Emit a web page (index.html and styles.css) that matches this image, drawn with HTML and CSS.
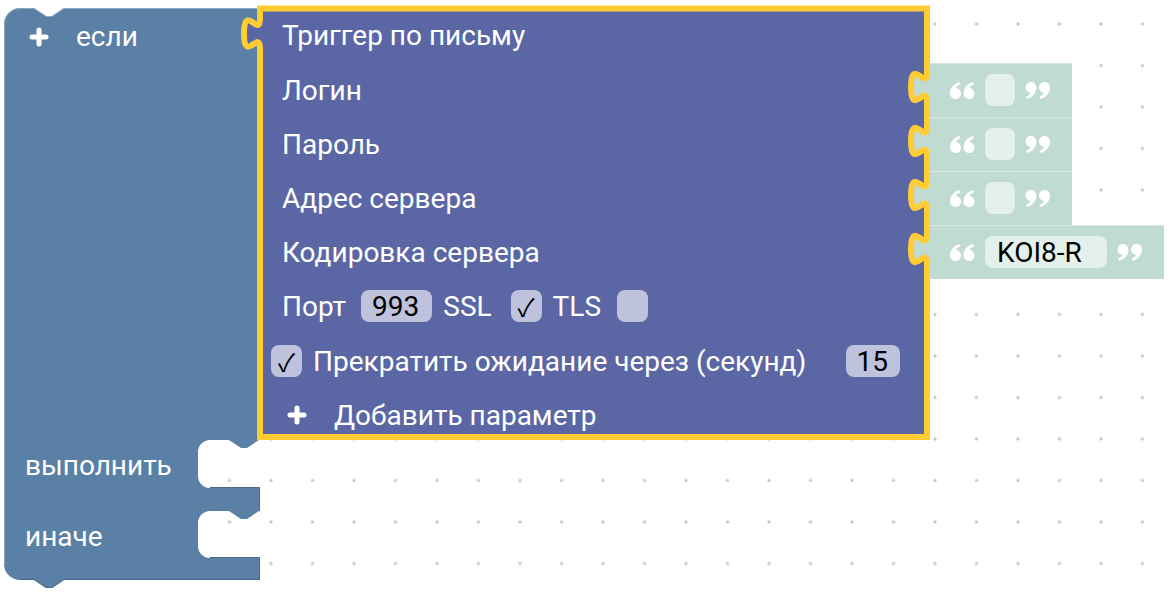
FILE: index.html
```html
<html lang="ru">
<head>
  <meta charset="UTF-8" />
  <title>Триггер по письму</title>
  <link rel="stylesheet" href="styles.css">
</head>
<body>
  <div class="workspace">

    <!-- блок "если / выполнить / иначе" -->
    <div class="block if-block">
      <svg class="shape if-shape" width="262" height="592" viewBox="0 0 262 592">
        <path class="if-fill" d="M4,24 a16,16 0 0 1 16,-16 H34 l12,8 h6 l12,-8 H260 V440 H259 l-12,8 h-6 l-12,-8 H210 a12,12 0 0 0 -12,12 V476 a12,12 0 0 0 12,12 H260 V511 H259 l-12,8 h-6 l-12,-8 H210 a12,12 0 0 0 -12,12 V546 a12,12 0 0 0 12,12 H260 V580 H64 l-12,8 h-6 l-12,-8 H20 a16,16 0 0 1 -16,-16 Z"/>
        <path class="if-light" d="M4.5,564 V24 a15.5,15.5 0 0 1 15.5,-15.5 H34 l12,8 h6 l12,-8 H258"/>
        <path class="if-dark" d="M210,487.5 H259.5 V511 M210,557.5 H259.5 V579.5 H64 l-12,8 h-6 l-12,-8 H20"/>
      </svg>
      <div class="if-head">
        <div class="if-title">
          <svg class="plus" width="20" height="20" viewBox="0 0 20 20"><path d="M10,3 V17 M3,10 H17"/></svg>
          <span>если</span>
        </div>
      </div>
      <div class="stmt stmt-do">выполнить</div>
      <div class="stmt-gap"></div>
      <div class="stmt stmt-else">иначе</div>
    </div>

    <!-- блок триггера с подключёнными строками -->
    <div class="block trigger-block">
      <svg class="shape trigger-shape" width="930" height="445" viewBox="240 3 930 445">
        <path class="trigger-fill" d="M260,8.5 H927 V72 c0,20 -16,-16 -16,15 s16,-5 16,15 V126 c0,20 -16,-16 -16,15 s16,-5 16,15 V180 c0,20 -16,-16 -16,15 s16,-5 16,15 V234 c0,20 -16,-16 -16,15 s16,-5 16,15 V437 H260 V48.5 c0,-20 -16,16 -16,-15 s16,5 16,-15 Z"/>
        <path class="tab-fill" d="M931,72 H927 c0,20 -16,-16 -16,15 s16,-5 16,15 H931 Z"/>
        <path class="tab-fill" d="M931,126 H927 c0,20 -16,-16 -16,15 s16,-5 16,15 H931 Z"/>
        <path class="tab-fill" d="M931,180 H927 c0,20 -16,-16 -16,15 s16,-5 16,15 H931 Z"/>
        <path class="tab-fill" d="M931,234 H927 c0,20 -16,-16 -16,15 s16,-5 16,15 H931 Z"/>
        <path class="selected" d="M260,8.5 H927 V72 c0,20 -16,-16 -16,15 s16,-5 16,15 V126 c0,20 -16,-16 -16,15 s16,-5 16,15 V180 c0,20 -16,-16 -16,15 s16,-5 16,15 V234 c0,20 -16,-16 -16,15 s16,-5 16,15 V437 H260 V48.5 c0,-20 -16,16 -16,-15 s16,5 16,-15 Z"/>
      </svg>

      <div class="row">Триггер по письму</div>

      <div class="row">Логин</div>
      <div class="text-block">
        <svg class="quote" width="25" height="17" viewBox="0 0 25 17"><path d="M0,11.5 C0,6 3.5,2 9.5,0 L10.5,2.3 C7.5,3.8 6.2,5 6,6.1 A5.5,5.5 0 1 1 0,11.5 Z M13.5,11.5 C13.5,6 17,2 23,0 L24,2.3 C21,3.8 19.7,5 19.5,6.1 A5.5,5.5 0 1 1 13.5,11.5 Z"/></svg>
        <span class="text-field"></span>
        <svg class="quote" width="25" height="17" viewBox="0 0 25 17"><path transform="rotate(180 12.5 8.5)" d="M0,11.5 C0,6 3.5,2 9.5,0 L10.5,2.3 C7.5,3.8 6.2,5 6,6.1 A5.5,5.5 0 1 1 0,11.5 Z M13.5,11.5 C13.5,6 17,2 23,0 L24,2.3 C21,3.8 19.7,5 19.5,6.1 A5.5,5.5 0 1 1 13.5,11.5 Z"/></svg>
      </div>

      <div class="row">Пароль</div>
      <div class="text-block">
        <svg class="quote" width="25" height="17" viewBox="0 0 25 17"><path d="M0,11.5 C0,6 3.5,2 9.5,0 L10.5,2.3 C7.5,3.8 6.2,5 6,6.1 A5.5,5.5 0 1 1 0,11.5 Z M13.5,11.5 C13.5,6 17,2 23,0 L24,2.3 C21,3.8 19.7,5 19.5,6.1 A5.5,5.5 0 1 1 13.5,11.5 Z"/></svg>
        <span class="text-field"></span>
        <svg class="quote" width="25" height="17" viewBox="0 0 25 17"><path transform="rotate(180 12.5 8.5)" d="M0,11.5 C0,6 3.5,2 9.5,0 L10.5,2.3 C7.5,3.8 6.2,5 6,6.1 A5.5,5.5 0 1 1 0,11.5 Z M13.5,11.5 C13.5,6 17,2 23,0 L24,2.3 C21,3.8 19.7,5 19.5,6.1 A5.5,5.5 0 1 1 13.5,11.5 Z"/></svg>
      </div>

      <div class="row">Адрес сервера</div>
      <div class="text-block">
        <svg class="quote" width="25" height="17" viewBox="0 0 25 17"><path d="M0,11.5 C0,6 3.5,2 9.5,0 L10.5,2.3 C7.5,3.8 6.2,5 6,6.1 A5.5,5.5 0 1 1 0,11.5 Z M13.5,11.5 C13.5,6 17,2 23,0 L24,2.3 C21,3.8 19.7,5 19.5,6.1 A5.5,5.5 0 1 1 13.5,11.5 Z"/></svg>
        <span class="text-field"></span>
        <svg class="quote" width="25" height="17" viewBox="0 0 25 17"><path transform="rotate(180 12.5 8.5)" d="M0,11.5 C0,6 3.5,2 9.5,0 L10.5,2.3 C7.5,3.8 6.2,5 6,6.1 A5.5,5.5 0 1 1 0,11.5 Z M13.5,11.5 C13.5,6 17,2 23,0 L24,2.3 C21,3.8 19.7,5 19.5,6.1 A5.5,5.5 0 1 1 13.5,11.5 Z"/></svg>
      </div>

      <div class="row">Кодировка сервера</div>
      <div class="text-block">
        <svg class="quote" width="25" height="17" viewBox="0 0 25 17"><path d="M0,11.5 C0,6 3.5,2 9.5,0 L10.5,2.3 C7.5,3.8 6.2,5 6,6.1 A5.5,5.5 0 1 1 0,11.5 Z M13.5,11.5 C13.5,6 17,2 23,0 L24,2.3 C21,3.8 19.7,5 19.5,6.1 A5.5,5.5 0 1 1 13.5,11.5 Z"/></svg>
        <span class="text-field">KOI8-R</span>
        <svg class="quote" width="25" height="17" viewBox="0 0 25 17"><path transform="rotate(180 12.5 8.5)" d="M0,11.5 C0,6 3.5,2 9.5,0 L10.5,2.3 C7.5,3.8 6.2,5 6,6.1 A5.5,5.5 0 1 1 0,11.5 Z M13.5,11.5 C13.5,6 17,2 23,0 L24,2.3 C21,3.8 19.7,5 19.5,6.1 A5.5,5.5 0 1 1 13.5,11.5 Z"/></svg>
      </div>

      <div class="row row-port">
        <span>Порт</span>
        <span class="field port-field">993</span>
        <span>SSL</span>
        <span class="check ssl-check">✓</span>
        <span>TLS</span>
        <span class="check tls-check"></span>
      </div>

      <div class="row row-timeout">
        <span class="check">✓</span>
        <span>Прекратить ожидание через (секунд)</span>
        <span class="field field-end">15</span>
      </div>

      <div class="row row-add">
        <svg class="plus" width="20" height="20" viewBox="0 0 20 20"><path d="M10,3 V17 M3,10 H17"/></svg>
        <span>Добавить параметр</span>
      </div>
    </div>

  </div>
</body>
</html>
```

FILE: styles.css
```css
body {
  margin: 0;
  font-family: Roboto, "Liberation Sans", sans-serif;
}

.workspace {
  position: relative;
  width: 1170px;
  height: 595px;
  overflow: hidden;
  background-color: #fff;
  background-image: radial-gradient(circle, #c9c9c9 1.3px, transparent 1.9px);
  background-size: 41.5px 41.5px;
  background-position: 1.25px 3.25px;
}

/* блоки лежат на холсте */
.block {
  position: absolute;
  isolation: isolate;
  color: #fff;
  font-size: 28px;
  white-space: nowrap;
}

.shape {
  position: absolute;
  z-index: -1;
  overflow: visible;
}

.plus path {
  stroke: #fff;
  stroke-width: 5;
  stroke-linecap: round;
  fill: none;
}

/* если / выполнить / иначе */
.if-block {
  left: 0;
  top: 8px;
  width: 260px;
  height: 572px;
  display: flex;
  flex-direction: column;
}

.if-shape {
  left: 0;
  top: -8px;
}

.if-fill { fill: #5b80a5; }
.if-light { fill: none; stroke: #8da7c1; stroke-width: 1; }
.if-dark { fill: none; stroke: #48678a; stroke-width: 1; }

.if-head {
  height: 432px;
}

.if-title {
  height: 57px;
  display: flex;
  align-items: center;
  gap: 27px;
  padding-left: 29px;
}

.stmt {
  display: flex;
  align-items: center;
  padding-left: 25px;
}

.stmt-do { height: 50px; }
.stmt-gap { height: 21px; }
.stmt-else { height: 50px; }

/* триггер по письму */
.trigger-block {
  left: 260px;
  top: 8px;
  display: grid;
  grid-template-columns: 667px auto;
  grid-template-rows: 55px 54px 54px 54px 54px 54px 56px 52px;
  column-gap: 3px;
}

.trigger-shape {
  left: -20px;
  top: -5px;
}

.trigger-fill { fill: #5b67a5; }
.tab-fill { fill: #bfdbd2; }
.selected { fill: none; stroke: #fc3; stroke-width: 6; }

.row {
  grid-column: 1;
  display: flex;
  align-items: center;
  gap: 11px;
  padding-left: 22px;
}

.port-field { margin-left: 4px; }
.ssl-check { margin-left: 8px; }
.tls-check { margin-left: 5px; }

.row-timeout {
  padding-left: 11px;
  padding-right: 27px;
}

.row-add {
  padding-left: 27px;
  gap: 27px;
}

.field,
.check {
  height: 32px;
  border-radius: 8px;
  background: #bec2dc;
  color: #000;
  display: flex;
  align-items: center;
  justify-content: center;
}

.field {
  padding: 0 13px 0 11px;
}

.check {
  width: 31px;
  font-family: "Noto Sans CJK JP", "DejaVu Sans", sans-serif;
  font-size: 25px;
}

.field-end {
  margin-left: auto;
  padding: 0 12px 0 11px;
}

/* строковые блоки справа */
.text-block {
  grid-column: 2;
  justify-self: start;
  display: flex;
  align-items: center;
  gap: 10px;
  padding: 0 22px 0 20px;
  background: #bfdbd2;
  box-shadow: inset 0 1px 0 #d5e8e1;
}

.quote path {
  fill: #fff;
}

.text-field {
  min-width: 30px;
  height: 32px;
  border-radius: 8px;
  background: #e3f0eb;
  color: #000;
  display: flex;
  align-items: center;
  box-sizing: border-box;
}

.text-field:not(:empty) {
  padding: 0 25px 0 12px;
}
```
